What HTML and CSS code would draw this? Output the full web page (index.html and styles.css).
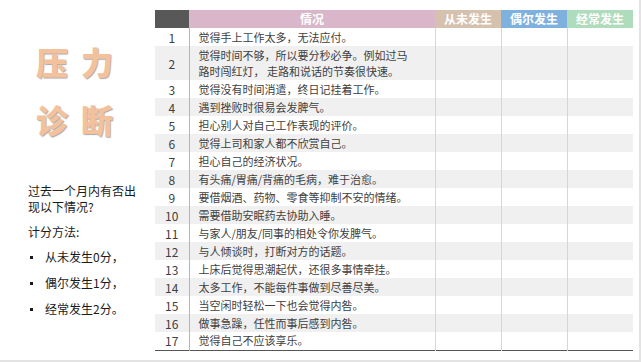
FILE: index.html
```html
<!DOCTYPE html>
<html lang="zh">
<head>
<meta charset="utf-8">
<link rel="stylesheet" href="styles.css">
</head>
<body>
<div class="slide">
  <aside class="side">
    <div class="title">
      <div class="title-line">压<span class="gap"></span>力</div>
      <div class="title-line">诊<span class="gap"></span>断</div>
    </div>
    <p class="question">过去一个月内有否出现以下情况?</p>
    <p class="method">计分方法:</p>
    <ul class="rules">
      <li>从未发生0分，</li>
      <li>偶尔发生1分，</li>
      <li>经常发生2分。</li>
    </ul>
  </aside>
  <table class="grid">
    <colgroup>
      <col class="c-num"><col class="c-text"><col class="c-opt"><col class="c-opt"><col class="c-opt">
    </colgroup>
    <thead>
      <tr>
        <th class="h-num"></th>
        <th class="h-text">情况</th>
        <th class="h-never">从未发生</th>
        <th class="h-some">偶尔发生</th>
        <th class="h-often">经常发生</th>
      </tr>
    </thead>
    <tbody>
      <tr><td class="num">1</td><td class="txt">觉得手上工作太多，无法应付。</td><td></td><td></td><td></td></tr>
      <tr class="tall"><td class="num">2</td><td class="txt">觉得时间不够，所以要分秒必争。例如过马<br>路时闯红灯， 走路和说话的节奏很快速。</td><td></td><td></td><td></td></tr>
      <tr><td class="num">3</td><td class="txt">觉得没有时间消遣，终日记挂着工作。</td><td></td><td></td><td></td></tr>
      <tr><td class="num">4</td><td class="txt">遇到挫败时很易会发脾气。</td><td></td><td></td><td></td></tr>
      <tr><td class="num">5</td><td class="txt">担心别人对自己工作表现的评价。</td><td></td><td></td><td></td></tr>
      <tr><td class="num">6</td><td class="txt">觉得上司和家人都不欣赏自己。</td><td></td><td></td><td></td></tr>
      <tr><td class="num">7</td><td class="txt">担心自己的经济状况。</td><td></td><td></td><td></td></tr>
      <tr><td class="num">8</td><td class="txt">有头痛/胃痛/背痛的毛病，难于治愈。</td><td></td><td></td><td></td></tr>
      <tr><td class="num">9</td><td class="txt">要借烟酒、药物、零食等抑制不安的情绪。</td><td></td><td></td><td></td></tr>
      <tr><td class="num">10</td><td class="txt">需要借助安眠药去协助入睡。</td><td></td><td></td><td></td></tr>
      <tr><td class="num">11</td><td class="txt">与家人/朋友/同事的相处令你发脾气。</td><td></td><td></td><td></td></tr>
      <tr><td class="num">12</td><td class="txt">与人倾谈时，打断对方的话题。</td><td></td><td></td><td></td></tr>
      <tr><td class="num">13</td><td class="txt">上床后觉得思潮起伏，还很多事情牵挂。</td><td></td><td></td><td></td></tr>
      <tr><td class="num">14</td><td class="txt">太多工作，不能每件事做到尽善尽美。</td><td></td><td></td><td></td></tr>
      <tr><td class="num">15</td><td class="txt">当空闲时轻松一下也会觉得内咎。</td><td></td><td></td><td></td></tr>
      <tr><td class="num">16</td><td class="txt">做事急躁，任性而事后感到内咎。</td><td></td><td></td><td></td></tr>
      <tr><td class="num">17</td><td class="txt">觉得自己不应该享乐。</td><td></td><td></td><td></td></tr>
    </tbody>
  </table>
</div>
</body>
</html>
```

FILE: styles.css
```css
html, body {
  margin: 0;
  padding: 0;
}
body {
  background: #e3e3e3;
  width: 641px;
  height: 362px;
  overflow: hidden;
  font-family: "Noto Sans CJK SC", "Liberation Sans", sans-serif;
  color: #404040;
}
.slide {
  width: 639px;
  height: 360px;
  background: #ffffff;
  display: flex;
  align-items: flex-start;
}
.side {
  width: 155px;
  flex: none;
  padding-top: 40px;
  box-sizing: border-box;
}
.title {
  display: flex;
  flex-direction: column;
  align-items: center;
  gap: 16px;
  padding-right: 6px;
}
.title-line {
  font-size: 32px;
  line-height: 42px;
  font-weight: 900;
  color: #f3c29d;
  text-shadow: 1px 1px 1px #a8a8a8;
  display: flex;
}
.gap {
  width: 13px;
}
.question {
  margin: 43px 0 0 28px;
  width: 112px;
  font-size: 12px;
  line-height: 16px;
  color: #1a1a1a;
}
.method {
  margin: 9px 0 0 28px;
  font-size: 12px;
  line-height: 16px;
  color: #1a1a1a;
}
.rules {
  margin: 9px 0 0 0;
  padding: 0 0 0 28px;
  list-style: none;
  display: flex;
  flex-direction: column;
  gap: 10px;
}
.rules li {
  font-size: 12px;
  line-height: 16px;
  color: #1a1a1a;
  display: flex;
  align-items: center;
}
.rules li::before {
  content: "";
  width: 3px;
  height: 3px;
  background: #1a1a1a;
  margin: 0 12px 0 2px;
}
.grid {
  margin-top: 10px;
  border-collapse: collapse;
  table-layout: fixed;
  width: 478px;
  font-size: 11px;
  border-bottom: 1px solid #555555;
}
.c-num { width: 34px; }
.c-text { width: 246px; }
.c-opt { width: 66px; }
.grid th {
  height: 18px;
  padding: 0;
  color: #ffffff;
  font-weight: 700;
  font-size: 12px;
  line-height: 16px;
  text-align: center;
}
.h-num { background: #585858; }
.h-text { background: #d9b6c9; }
.h-never { background: #d5c1ae; }
.h-some { background: #7fb1df; }
.h-often { background: #afdcbc; }
.grid td {
  height: 18px;
  box-sizing: border-box;
  padding: 0;
  line-height: 15px;
  border-left: 1px solid #d6d6d6;
}
.grid td.num {
  text-align: center;
  font-size: 12px;
  border-left: none;
  border-right: 1px solid #b5b5b5;
}
.grid td.txt {
  padding-left: 9px;
  border-left: none;
  white-space: nowrap;
  overflow: hidden;
}
.grid tr.tall td {
  height: 34px;
}
.grid tr.tall td.txt {
  line-height: 16px;
}
.grid tbody tr:nth-child(even) {
  background: #f0f0f0;
}
```
